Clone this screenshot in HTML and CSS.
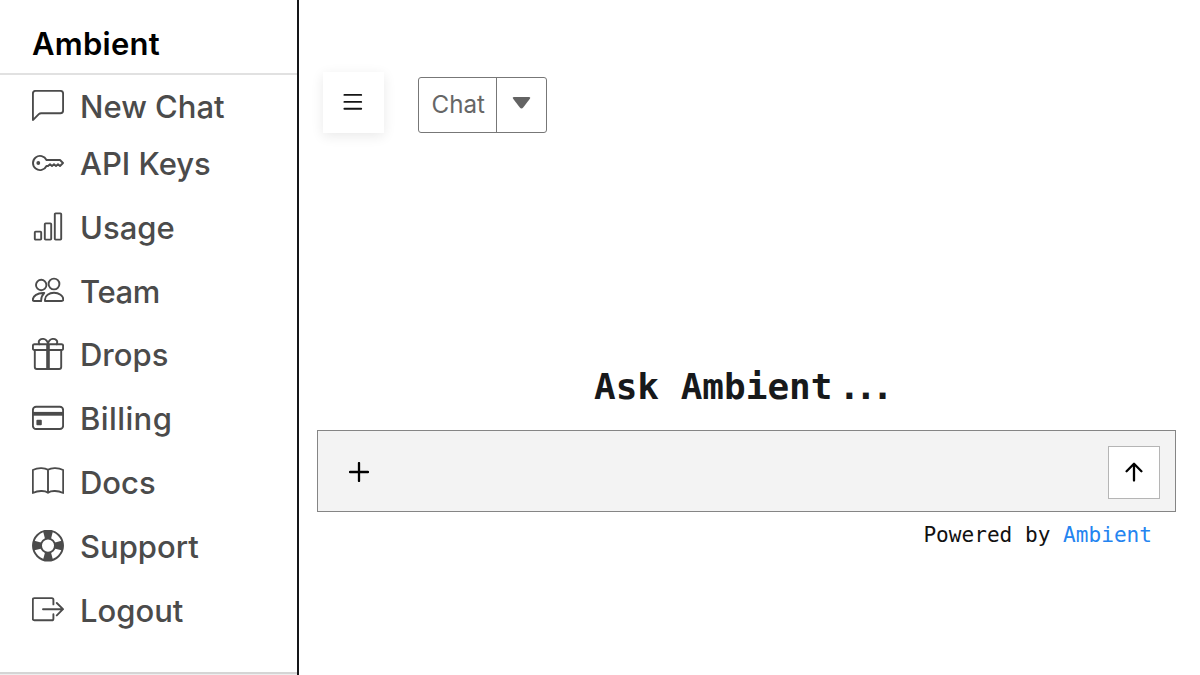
FILE: index.html
```html
<!DOCTYPE html>
<html lang="en">
<head>
<meta charset="utf-8">
<title>Ambient</title>
<link rel="stylesheet" href="styles.css">
</head>
<body>
<div class="app">
  <aside class="sidebar">
    <header class="brand">Ambient</header>
    <nav class="nav">
      <a class="item item-first"><svg class="icon" viewBox="0 0 32 32"><path d="M.9 30V3.6Q.9 .9 3.6 .9H28.4Q31.1 .9 31.1 3.6V20.5Q31.1 23.2 28.4 23.2H9.2Q7.8 23.2 6.8 24.2L1.4 29.6Z"/></svg><span>New Chat</span></a>
      <a class="item"><svg class="icon" viewBox="0 0 32 32"><path d="M14.5 13H28L31 16L28 19L26 17.2L24 19L22 17.2L20 19L18 17.2L16 19H14.5A7.1 7.1 0 1 1 14.5 13Z"/><circle class="solid" cx="6.3" cy="16" r="1.9"/></svg><span>API Keys</span></a>
      <a class="item"><svg class="icon" viewBox="0 0 32 32"><rect x="2.8" y="20.6" width="6.4" height="8" rx=".8"/><rect x="12.8" y="12.4" width="6.4" height="16.2" rx=".8"/><rect x="22.8" y="2.4" width="6.4" height="26.2" rx=".8"/></svg><span>Usage</span></a>
      <a class="item"><svg class="icon" viewBox="0 0 32 32"><circle cx="9.2" cy="10" r="5.2"/><circle cx="22" cy="9" r="5.4"/><path d="M13 26V24.5C13 20.8 17 17.8 22 17.8S31.3 21 31.3 24.6Q31.3 26 29.5 26ZM12.2 18C5.5 17.5 .8 21.2 .8 24.7Q.8 26 2.5 26H9.2C9 22.8 10 20.2 12.2 18Z"/></svg><span class="t-team">Team</span></a>
      <a class="item"><svg class="icon" viewBox="0 0 32 32"><rect x=".9" y="6.2" width="30.2" height="5.8" rx="1.5"/><path d="M2.8 12V29Q2.8 31 4.8 31H27.2Q29.2 31 29.2 29V12M7.4 6.2C5.6 3 8 .9 11 .9S16 3.8 16 6.2C16 3.8 18 .9 21 .9S26.4 3 24.6 6.2"/><path class="stem" d="M16 6V31"/></svg><span>Drops</span></a>
      <a class="item"><svg class="icon" viewBox="0 0 32 32"><rect x=".9" y="4.8" width="30.2" height="22.2" rx="3.2"/><path class="stripe" d="M1 11.8H31"/><rect class="solid" x="4.4" y="17.8" width="5.4" height="5.4" rx="1"/></svg><span class="t-billing">Billing</span></a>
      <a class="item"><svg class="icon" viewBox="0 0 32 32"><path d="M16 3.8C12.2 1.2 5.5 1.8 .8 4V27C6 24.7 12.5 24.2 16 26.7C19.5 24.2 26 24.7 31.2 27V4C26.5 1.8 19.8 1.2 16 3.8V26.7"/></svg><span>Docs</span></a>
      <a class="item"><svg class="icon" viewBox="0 0 32 32"><circle cx="16" cy="15.6" r="15"/><circle cx="16" cy="15.6" r="7"/><path class="solid" d="M11 1.1A15.5 15.5 0 0 1 21 1.1L18.8 9.4A7 7 0 0 0 13.2 9.4ZM30.5 10.6A15.5 15.5 0 0 1 30.5 20.6L22.2 18.4A7 7 0 0 0 22.2 12.8ZM21 30.1A15.5 15.5 0 0 1 11 30.1L13.2 21.8A7 7 0 0 0 18.8 21.8ZM1.5 20.6A15.5 15.5 0 0 1 1.5 10.6L9.8 12.8A7 7 0 0 0 9.8 18.4Z"/></svg><span>Support</span></a>
      <a class="item"><svg class="icon" viewBox="0 0 32 32"><path d="M21.4 10.4V5.7Q21.4 4.1 19.8 4.1H2.4Q.8 4.1 .8 5.7V24.7Q.8 26.3 2.4 26.3H19.8Q21.4 26.3 21.4 24.7V20.2M11 15.2H31M24.8 9L31 15.2L24.8 21.4"/></svg><span>Logout</span></a>
    </nav>
    <footer class="sidebar-foot"></footer>
  </aside>
  <main class="main">
    <div class="toolbar">
      <button class="menu" aria-label="Menu"><svg width="20" height="18" viewBox="0 0 20 18"><path d="M1.4 1.9H18.2M1.4 8.9H18.2M1.4 15.8H18.2"/></svg></button>
      <div class="mode"><span class="mode-label">Chat</span><span class="mode-caret"><svg width="20" height="14" viewBox="0 0 20 14"><path d="M2.2 1H16.8Q19.2 1 17.7 3.1L11.2 11.4Q9.5 13.4 7.8 11.4L1.3 3.1Q-.2 1 2.2 1Z"/></svg></span></div>
    </div>
    <h1 class="title">Ask Ambient<span class="dots">...</span></h1>
    <div class="composer">
      <svg class="plus" width="20" height="20" viewBox="0 0 20 20"><path d="M10 1V19M1 10H19"/></svg>
      <button class="send" aria-label="Send"><svg width="18" height="20" viewBox="0 0 18 20"><path d="M9 18.6V2M1.6 9.2L9 1.8L16.4 9.2"/></svg></button>
    </div>
    <p class="powered">Powered by <a class="link">Ambient</a></p>
  </main>
</div>
</body>
</html>
```
FILE: styles.css
```css
* { box-sizing: border-box; }
body { margin: 0; background: #fff; font-family: Inter, "Liberation Sans", sans-serif; }
button { padding: 0; font: inherit; }
svg { display: block; fill: none; stroke-linecap: round; stroke-linejoin: round; }
.app { display: flex; width: 1200px; height: 675px; overflow: hidden; }
.sidebar { width: 299px; flex: none; border-right: 2px solid #151719; display: flex; flex-direction: column; }
.brand { height: 75px; flex: none; padding: 25px 0 0 32px; border-bottom: 2px solid #e1e1e1; font-size: 31px; line-height: 38px; font-weight: 600; letter-spacing: .25px; color: #000; }
.nav { flex: 1; padding: 15px 0 0 32px; color: #4b4b4b; }
.item { display: flex; gap: 16px; height: 63.8px; font-size: 31px; font-weight: 500; line-height: 33px; white-space: nowrap; }
.item-first { height: 57px; }
.t-team { letter-spacing: -.4px; }
.t-billing { letter-spacing: .4px; }
.icon { width: 32px; height: 32px; flex: none; stroke: currentColor; stroke-width: 1.9; }
.icon .solid { fill: currentColor; stroke: none; }
.icon .stem { stroke-width: 3.6; stroke-linecap: butt; }
.icon .stripe { stroke-width: 3.8; stroke-linecap: butt; }
.sidebar-foot { height: 3px; flex: none; background: #eee; border-top: 2px solid #d5d5d5; }
.main { flex: 1; min-width: 0; padding: 72px 24px 0 18px; }
.toolbar { display: flex; align-items: flex-start; padding-left: 6px; height: 61px; }
.menu { width: 61px; height: 61px; border: 0; background: #fff; box-shadow: 0 3px 12px rgba(0,0,0,.09); display: grid; place-items: center; padding: 0 1px 2px 0; }
.menu svg { stroke: #151515; stroke-width: 1.9; }
.mode { margin: 5px 0 0 34px; width: 129px; height: 56px; display: flex; border: 1px solid #777; border-radius: 3px; color: #666; }
.mode-label { width: 78px; border-right: 1px solid #777; padding-left: 12.5px; font-size: 24.2px; line-height: 53px; }
.mode-caret { flex: 1; display: grid; place-items: center; padding-bottom: 4px; }
.mode-caret svg { fill: #636363; }
.title { margin: 232px 0 0 277px; font: bold 36px/44px "DejaVu Sans Mono", monospace; color: #17191b; white-space: nowrap; }
.dots { letter-spacing: -5px; margin-left: 6px; }
.composer { margin-top: 21px; height: 82px; background: #f3f3f3; border: 1px solid #858585; display: flex; align-items: center; justify-content: space-between; padding: 2px 15px 0 31px; }
.plus { stroke: #000; stroke-width: 2.3; }
.send { width: 52px; height: 53px; background: #fff; border: 1px solid #b5b5b5; display: grid; place-items: center; }
.send svg { stroke: #000; stroke-width: 2.3; }
.powered { margin: 10px 24px 0 0; text-align: right; font: 21.1px/26px "DejaVu Sans Mono", monospace; color: #111; }
.link { color: #2484f0; }
```
